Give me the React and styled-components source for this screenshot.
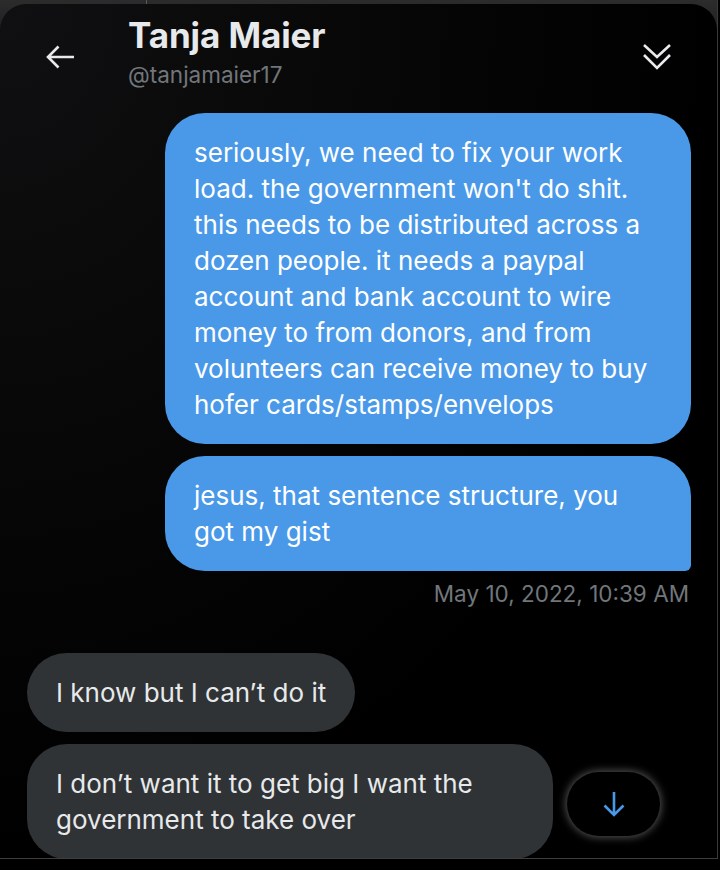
import styled, { createGlobalStyle } from "styled-components";

const GlobalStyle = createGlobalStyle`
    html, body {
        margin: 0;
        padding: 0;
        background: #000;
    }
    body {
        font-family: Inter, "Noto Sans", "Liberation Sans", sans-serif;
        -webkit-font-smoothing: antialiased;
    }
`;

const BackIcon = () => (
    <svg width="30" height="24" viewBox="0 0 30 24" fill="none">
        <path
            d="M2 12 H28 M12.5 1.5 L2 12 L12.5 22.5"
            stroke="#e7e9ea"
            strokeWidth="2.6"
        />
    </svg>
);

const ChevronsIcon = () => (
    <svg width="30" height="28" viewBox="0 0 30 28" fill="none">
        <path
            d="M2 2 L15 14 L28 2 M2 12 L15 25 L28 12"
            stroke="#e7e9ea"
            strokeWidth="2.6"
        />
    </svg>
);

const ArrowDownIcon = () => (
    <svg width="22" height="26" viewBox="0 0 22 26" fill="none">
        <path
            d="M11 1 V24 M1.5 14.5 L11 24 L20.5 14.5"
            stroke="#4a99e9"
            strokeWidth="2.6"
        />
    </svg>
);

const sent = [
    "seriously, we need to fix your work load. the government won't do shit. this needs to be distributed across a dozen people. it needs a paypal account and bank account to wire money to from donors, and from volunteers can receive money to buy hofer cards/stamps/envelops",
    "jesus, that sentence structure, you got my gist",
];

const received = [
    "I know but I can’t do it",
    "I don’t want it to get big I want the government to take over",
];

const App = () => {
    return (
        <S.Page>
            <GlobalStyle />
            <S.Window>
                <S.Panel>
                    <S.Header>
                        <S.BackButton>
                            <BackIcon />
                        </S.BackButton>
                        <S.TitleBlock>
                            <S.Name>Tanja Maier</S.Name>
                            <S.Handle>@tanjamaier17</S.Handle>
                        </S.TitleBlock>
                        <S.CollapseButton>
                            <ChevronsIcon />
                        </S.CollapseButton>
                    </S.Header>

                    <S.Messages>
                        <S.Group $side="right">
                            {sent.map((text, i) => (
                                <S.Bubble
                                    key={i}
                                    $mine
                                    $last={i === sent.length - 1}
                                >
                                    {text}
                                </S.Bubble>
                            ))}
                            <S.Time>May 10, 2022, 10:39 AM</S.Time>
                        </S.Group>

                        <S.Group $side="left">
                            {received.map((text, i) => (
                                <S.Bubble key={i}>{text}</S.Bubble>
                            ))}
                        </S.Group>
                    </S.Messages>

                    <S.ScrollDown>
                        <ArrowDownIcon />
                    </S.ScrollDown>
                </S.Panel>
            </S.Window>
        </S.Page>
    );
};

const Page = styled.div`
    width: 720px;
    height: 870px;
    background: #000;
    overflow: hidden;
`;

const Window = styled.div`
    position: relative;
    width: 718px;
    height: 859px;
    box-sizing: border-box;
    padding-top: 4px;
    background: linear-gradient(180deg, #2c2c2c 0%, #1c1c1c 40px, #141414 100%);
    border-right: 1px solid #3a3a3a;
    border-bottom: 1px solid #3e3e3e;
    &::before {
        content: "";
        position: absolute;
        top: 0;
        left: 146px;
        width: 1px;
        height: 4px;
        background: #5a5a5a;
    }
`;

const Panel = styled.div`
    position: relative;
    height: 100%;
    border-radius: 26px 26px 0 0;
    background: radial-gradient(
        ellipse at 0% 0%,
        #101012 0%,
        #050505 45%,
        #000 70%
    );
    overflow: hidden;
`;

const Header = styled.div`
    display: flex;
    align-items: flex-start;
    padding: 9px 45px 0 46px;
`;

const BackButton = styled.div`
    width: 82px;
    margin-top: 32px;
    display: flex;
`;

const TitleBlock = styled.div`
    flex: 1;
    display: flex;
    flex-direction: column;
`;

const Name = styled.div`
    font-size: 35px;
    line-height: 44px;
    font-weight: 700;
    color: #e7e9ea;
    letter-spacing: -0.1px;
`;

const Handle = styled.div`
    margin-top: 4px;
    font-size: 22.5px;
    line-height: 28px;
    color: #71767b;
`;

const CollapseButton = styled.div`
    margin-top: 30px;
    display: flex;
`;

const Messages = styled.div`
    display: flex;
    flex-direction: column;
    gap: 45px;
    padding: 24px 26px 0 27px;
`;

const Group = styled.div`
    display: flex;
    flex-direction: column;
    align-items: ${(p) => (p.$side === "right" ? "flex-end" : "flex-start")};
    gap: 12px;
`;

const Bubble = styled.div`
    max-width: 526px;
    box-sizing: border-box;
    padding: 22px 29px 21px;
    font-size: 26px;
    line-height: 36px;
    color: ${(p) => (p.$mine ? "#fff" : "#e7e9ea")};
    background: ${(p) => (p.$mine ? "#4a99e9" : "#2f3336")};
    border-radius: ${(p) => (p.$last ? "40px 40px 6px 40px" : "40px")};
`;

const Time = styled.div`
    margin-top: -3px;
    padding-right: 2px;
    font-size: 22.5px;
    line-height: 28px;
    color: #71767b;
`;

const ScrollDown = styled.div`
    position: absolute;
    left: 567px;
    top: 768px;
    width: 93px;
    height: 64px;
    border-radius: 32px;
    background: #000;
    box-shadow: 0 0 8px 1px rgba(255, 255, 255, 0.35);
    display: flex;
    align-items: center;
    justify-content: center;
`;

const S = {
    Page,
    Window,
    Panel,
    Header,
    BackButton,
    TitleBlock,
    Name,
    Handle,
    CollapseButton,
    Messages,
    Group,
    Bubble,
    Time,
    ScrollDown,
};

export default App;
